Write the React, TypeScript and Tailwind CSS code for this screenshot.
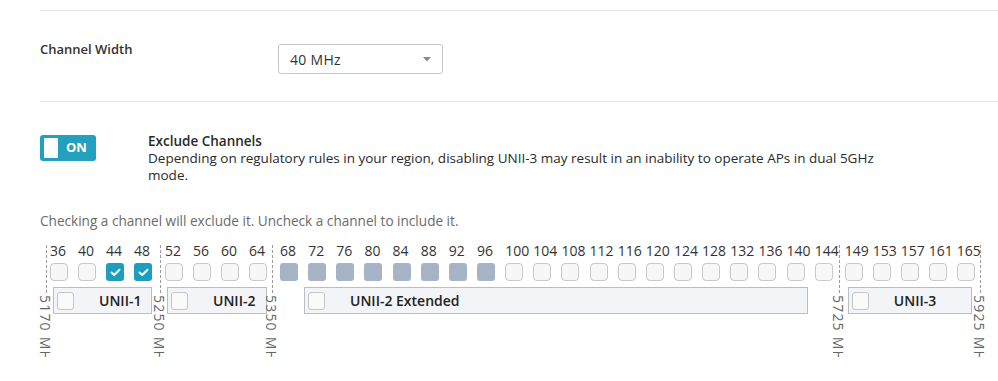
import React from "react";

const FONT = { fontFamily: '"Open Sans", "Liberation Sans", sans-serif' };

type Group = {
  chs: number[];
  label: string;
  colW: string;
  boxCls: string;
};

const groups: Group[] = [
  { chs: [36, 40, 44, 48], label: "UNII-1", colW: "w-[28px]", boxCls: "ml-[3px] w-[99px]" },
  { chs: [52, 56, 60, 64], label: "UNII-2", colW: "w-[28px]", boxCls: "ml-[2px] w-[100px]" },
  {
    chs: [68, 72, 76, 80, 84, 88, 92, 96, 100, 104, 108, 112, 116, 120, 124, 128, 132, 136, 140, 144],
    label: "UNII-2 Extended",
    colW: "w-[28.15px]",
    boxCls: "ml-[24px] w-[504px]",
  },
  { chs: [149, 153, 157, 161, 165], label: "UNII-3", colW: "w-[28px]", boxCls: "ml-[3px] w-[124px]" },
];

const checked = new Set([44, 48]);
const disabled = new Set([68, 72, 76, 80, 84, 88, 92, 96]);

function Check() {
  return (
    <svg width="11" height="9" viewBox="0 0 11 9">
      <path d="M1.5 4.5 L4.2 7 L9.5 1.8" fill="none" stroke="white" strokeWidth="2" strokeLinecap="round" strokeLinejoin="round" />
    </svg>
  );
}

function Box({ ch }: { ch: number }) {
  if (checked.has(ch))
    return (
      <div className="w-[18px] h-[18px] rounded-[3px] bg-[#1e9dbd] flex items-center justify-center">
        <Check />
      </div>
    );
  if (disabled.has(ch)) return <div className="w-[18px] h-[18px] rounded-[3px] bg-[#a7b4c6]" />;
  return <div className="w-[18px] h-[18px] rounded-[4px] bg-[#f7f7f7] border border-[#c9c9c9]" />;
}

function Sep({ label, cls }: { label: string; cls: string }) {
  return (
    <div className={`relative w-px shrink-0 ${cls}`}>
      <div className="h-[48px] mt-[2px] border-l border-dashed border-[#9b9b9b]" />
      <div className="absolute top-[52px] left-[-10px] w-[18px] h-[62px] overflow-hidden">
        <div
          className="text-[14px] leading-[18px] text-[#666] whitespace-nowrap tracking-[1.2px]"
          style={{ writingMode: "vertical-rl" }}
        >
          {label}
        </div>
      </div>
    </div>
  );
}

function GroupView({ g }: { g: Group }) {
  return (
    <div className="flex flex-col shrink-0">
      <div className="flex">
        {g.chs.map((ch) => (
          <div key={ch} className={`${g.colW} shrink-0 flex flex-col`}>
            <div className="text-[14px] leading-[16px] text-[#333] whitespace-nowrap">{ch}</div>
            <div className="mt-[4px]">
              <Box ch={ch} />
            </div>
          </div>
        ))}
      </div>
      <div
        className={`${g.boxCls} mt-[6px] h-[27px] bg-[#f3f4f8] border border-[#b9bec6] flex items-center pl-[3px]`}
      >
        <div className="w-[17px] h-[18px] rounded-[3px] bg-[#fafafa] border border-[#c6c6c6] shrink-0" />
        <div className="ml-[25px] text-[14px] font-semibold text-[#222] whitespace-nowrap">{g.label}</div>
      </div>
    </div>
  );
}

export default function App() {
  return (
    <div className="w-[998px] h-[381px] bg-white overflow-hidden text-[#333]" style={FONT}>
      <div className="ml-[40px] mt-[10px] border-t border-[#e5e5e5]" />
      {/* Channel Width */}
      <div className="ml-[40px] flex pt-[33px] pb-[27px] border-b border-[#e5e5e5]">
        <div className="w-[238px] -mt-[3px] text-[13px] leading-[16px] font-semibold text-[#333]">Channel Width</div>
        <div className="w-[165px] h-[30px] border border-[#c8c8c8] rounded-[3px] flex items-center justify-between pl-[11px] pr-[11px]">
          <span className="text-[14px] tracking-[0.3px] text-[#333]">40 MHz</span>
          <svg width="8" height="5" viewBox="0 0 8 5">
            <path d="M0 0 L8 0 L4 4.5 Z" fill="#8a8a8a" />
          </svg>
        </div>
      </div>
      {/* Exclude channels */}
      <div className="ml-[40px] flex pt-[33px]">
        <div className="w-[56px] h-[26px] rounded-[3px] bg-[#22a0be] flex items-center pl-[4px] shrink-0">
          <div className="w-[14px] h-[20px] bg-white rounded-[1px]" />
          <span className="ml-[8px] text-[13px] font-bold text-white">ON</span>
        </div>
        <div className="ml-[52px] -mt-[2px] w-[745px]">
          <div className="text-[13.5px] leading-[17px] font-semibold text-[#2a2a2a]">Exclude Channels</div>
          <div className="text-[13.5px] leading-[17px] font-medium text-[#2a2a2a]">
            Depending on regulatory rules in your region, disabling UNII-3 may result in an inability to operate APs in
            dual 5GHz mode.
          </div>
        </div>
      </div>
      <div className="ml-[40px] mt-[29px] text-[13.6px] leading-[16px] text-[#6b6b6b]">
        Checking a channel will exclude it. Uncheck a channel to include it.
      </div>
      {/* Channels */}
      <div className="flex pl-[46px] mt-[14px]">
        <Sep label="5170 MHz" cls="mr-[3px]" />
        <GroupView g={groups[0]} />
        <Sep label="5250 MHz" cls="-ml-[2px] mr-[4px]" />
        <GroupView g={groups[1]} />
        <Sep label="5350 MHz" cls="-ml-[5px] mr-[7px]" />
        <GroupView g={groups[2]} />
        <Sep label="5725 MHz" cls="-ml-[4px] mr-[5px]" />
        <GroupView g={groups[3]} />
        <Sep label="5925 MHz" cls="-ml-[5px]" />
      </div>
    </div>
  );
}
